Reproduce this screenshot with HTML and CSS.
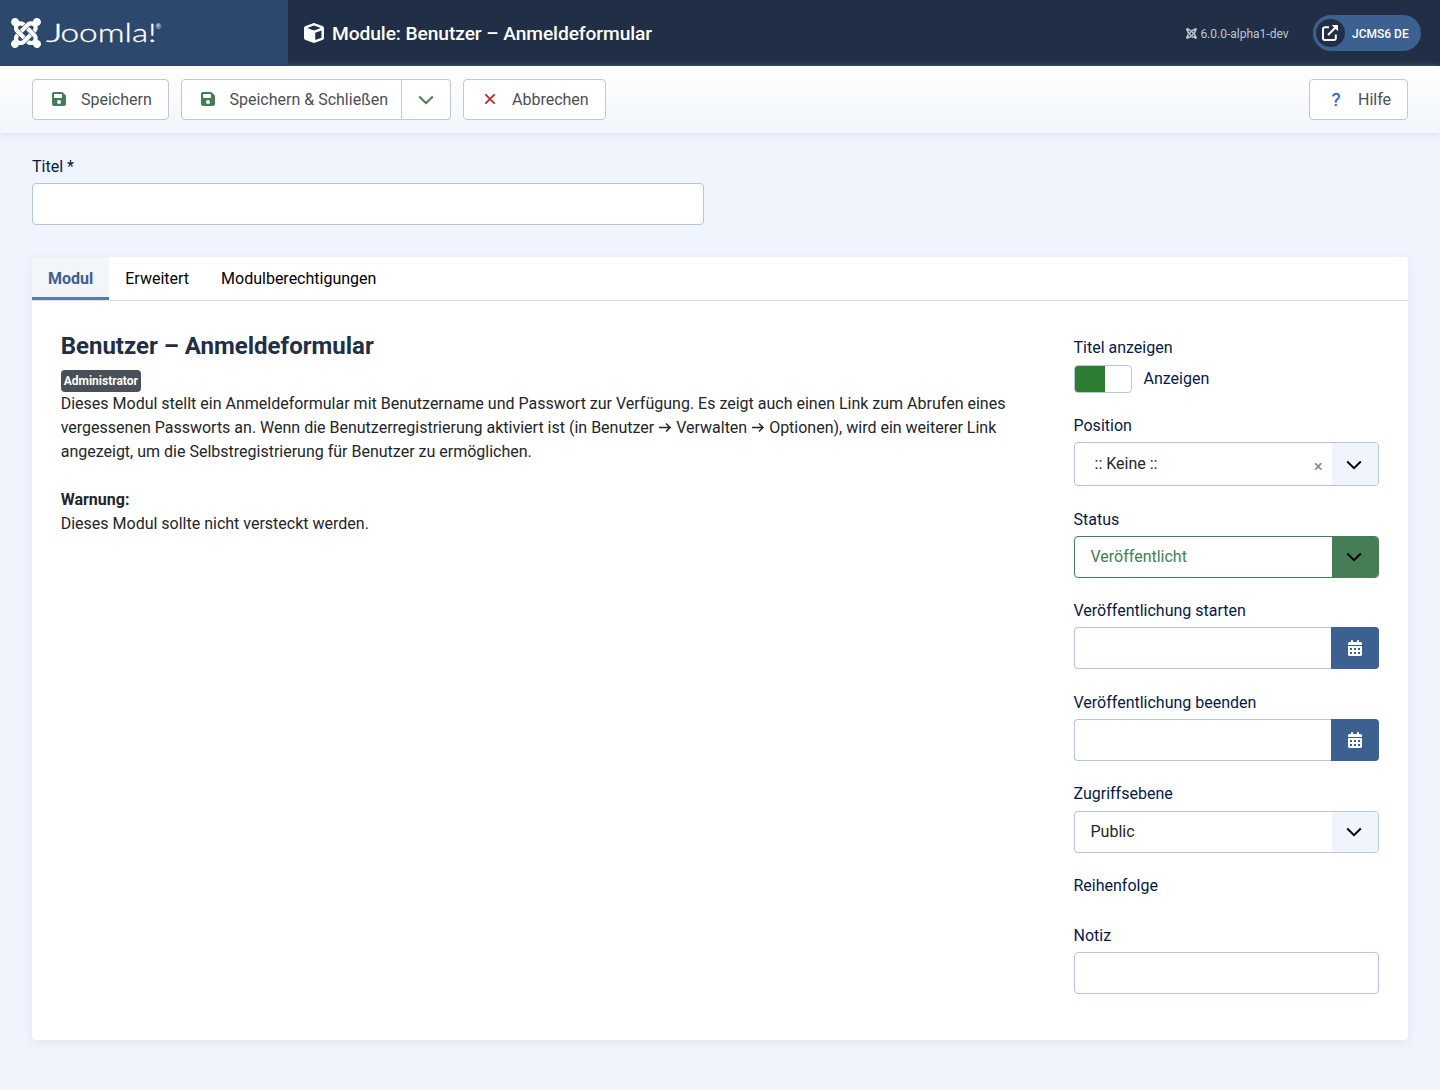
FILE: index.html
```html
<!DOCTYPE html>
<html lang="de">
<head>
<meta charset="utf-8">
<title>Module: Benutzer – Anmeldeformular</title>
<link rel="stylesheet" href="styles.css">
</head>
<body>
<svg class="defs" aria-hidden="true">
  <symbol id="joomla" viewBox="0 32 448 448"><path d="M.6 92.1C.6 58.8 27.4 32 60.4 32c30 0 54.5 21.9 59.2 50.2 32.6-7.6 67.1.6 96.5 30l-44.3 44.3c-20.5-20.5-42.6-16.3-55.4-3.5-14.3 14.3-14.3 37.9 0 52.2l99.5 99.5-44 44.3c-87.7-87.2-49.7-49.7-99.8-99.7-26.8-26.5-35-64.8-24.8-98.9C20.4 144.6.6 120.7.6 92.1zm129.5 116.4l44.3 44.3c10-10 89.7-89.7 99.7-99.8 14.3-14.3 37.6-14.3 51.9 0 12.8 12.8 17 35-3.5 55.4l44 44.3c31.2-31.2 38.5-67.6 28.9-101.2 29.2-4.1 51.9-29.2 51.9-59.5 0-33.2-26.8-60.1-59.8-60.1-30.3 0-55.4 22.5-59.5 51.6-33.8-9.900-71.700-1.500-98.300 25.100-18.300 19.100-71.100 71.500-99.600 99.900zm266.300 152.200c8.200-32.700-.9-68.500-26.300-93.900-11.800-12.200 5 4.700-99.500-99.700l-44.300 44.300 99.700 99.700c14.300 14.300 14.300 37.600 0 51.900-12.800 12.800-35 17-55.400-3.500l-44 44.300c27.600 30.200 68 38.800 102.700 28 5.500 27.400 29.700 48.100 58.900 48.100 33 0 59.800-26.800 59.800-60.100 0-30.200-22.500-55-51.600-59.100zm-84.300-53.100l-44-44.300c-87 86.400-50.400 50.400-99.700 99.800-14.300 14.300-37.600 14.300-51.900 0-13.100-13.400-16.900-35.300 3.200-55.400l-44-44.300c-30.200 30.200-38 65.200-29.500 98.300-26.700 6-46.200 29.900-46.200 58.200C0 453.200 26.800 480 59.800 480c28.600 0 52.500-19.800 58.600-46.700 32.700 8.200 68.500-.6 94.200-26 32.100-32 12.200-12.400 99.500-99.700z"/></symbol>
  <symbol id="save" viewBox="0 32 448 448"><path d="M64 32C28.700 32 0 60.700 0 96V416c0 35.300 28.700 64 64 64H384c35.300 0 64-28.700 64-64V173.300c0-17-6.700-33.300-18.700-45.300L352 50.700C340 38.700 323.700 32 306.700 32H64zm0 96c0-17.700 14.300-32 32-32H288c17.700 0 32 14.300 32 32v64c0 17.700-14.300 32-32 32H96c-17.700 0-32-14.300-32-32V128zM224 288a64 64 0 1 1 0 128 64 64 0 1 1 0-128z"/></symbol>
  <symbol id="cube" viewBox="0 0 512 512"><path d="M234.500 5.700c13.900-5 29.100-5 43.100 0l192 68.600C495 83.400 512 107.500 512 134.600V377.400c0 27-17 51.200-42.500 60.300l-192 68.600c-13.900 5-29.100 5-43.100 0l-192-68.600C17 428.600 0 404.500 0 377.400V134.600c0-27 17-51.200 42.500-60.300l192-68.600zM256 66L82.300 128 256 190l173.700-62L256 66zm32 368.600l160-57.100v-188L288 246.600v188z"/></symbol>
  <symbol id="calendar" viewBox="0 0 448 512"><path fill-rule="evenodd" d="M128 0c17.700 0 32 14.300 32 32V64H288V32c0-17.700 14.300-32 32-32s32 14.300 32 32V64h48c26.500 0 48 21.500 48 48v48H0V112C0 85.500 21.500 64 48 64H96V32c0-17.700 14.300-32 32-32zM0 192H448V464c0 26.500-21.500 48-48 48H48c-26.500 0-48-21.500-48-48V192zM64 256v64h64v-64zM192 256v64h64v-64zM320 256v64h64v-64zM64 384v64h64v-64zM192 384v64h64v-64zM320 384v64h64v-64z"/></symbol>
  <symbol id="chevron" viewBox="0 0 16 10"><path fill="none" stroke="currentColor" stroke-width="2" d="M1.200 1.500 8 8.200 14.800 1.500"/></symbol>
  <symbol id="external" viewBox="0 0 16 16"><path fill="none" stroke="currentColor" stroke-width="2" d="M7 2.200H2.800A1.800 1.800 0 0 0 1 4v9.200A1.800 1.800 0 0 0 2.800 15H12a1.800 1.800 0 0 0 1.800-1.800V9.500M6 10 13.500 2.500"/><path d="M9.700 0H16v6.300z"/></symbol>
  <symbol id="cross" viewBox="0 0 10 10"><path fill="none" stroke="currentColor" stroke-width="1.800" d="m.3.3 9.400 9.400M9.700.3.3 9.700"/></symbol>
</svg>

<header class="header">
  <div class="brand">
    <svg class="brand-mark"><use href="#joomla"/></svg>
    <svg class="brand-word" viewBox="0 0 118 32">
      <text class="word" x="0" y="25" textLength="17" lengthAdjust="spacingAndGlyphs">J</text>
      <text class="word" x="14.500" y="25" textLength="96" lengthAdjust="spacingAndGlyphs">oomla!</text>
      <text class="reg" x="109.500" y="12">®</text>
    </svg>
  </div>
  <div class="header-main">
    <svg class="cube"><use href="#cube"/></svg>
    <h1 class="page-title">Module: Benutzer – Anmeldeformular</h1>
    <div class="version"><svg class="version-mark"><use href="#joomla"/></svg>6.0.0-alpha1-dev</div>
    <a class="site-link"><span class="site-icon"><svg><use href="#external"/></svg></span><span class="site-name">JCMS6 DE</span></a>
  </div>
</header>

<div class="toolbar">
  <button class="btn btn-save"><svg class="icon"><use href="#save"/></svg><span>Speichern</span></button>
  <div class="btn-group">
    <button class="btn btn-close"><svg class="icon"><use href="#save"/></svg><span>Speichern &amp; Schließen</span></button>
    <button class="btn btn-toggle"><svg class="chevron"><use href="#chevron"/></svg></button>
  </div>
  <button class="btn btn-cancel"><svg class="icon-cross"><use href="#cross"/></svg><span>Abbrechen</span></button>
  <button class="btn btn-help"><span class="question">?</span><span>Hilfe</span></button>
</div>

<main class="content">
  <div class="title-field">
    <label class="label" for="titel">Titel *</label>
    <input class="input" id="titel" type="text">
  </div>

  <section class="card">
    <nav class="tabs">
      <a class="tab tab-active">Modul</a>
      <a class="tab">Erweitert</a>
      <a class="tab">Modulberechtigungen</a>
    </nav>
    <div class="panel">
      <article class="description">
        <h2 class="module-name">Benutzer – Anmeldeformular</h2>
        <div class="badge-row"><span class="badge">Administrator</span></div>
        <p class="text">Dieses Modul stellt ein Anmeldeformular mit Benutzername und Passwort zur Verfügung. Es zeigt auch einen Link zum Abrufen eines<br>vergessenen Passworts an. Wenn die Benutzerregistrierung aktiviert ist (in Benutzer <svg class="arrow" viewBox="0 0 14 12"><path d="M1 6.500h11M8 2.500l4 4-4 4"/></svg> Verwalten <svg class="arrow" viewBox="0 0 14 12"><path d="M1 6.500h11M8 2.500l4 4-4 4"/></svg> Optionen), wird ein weiterer Link<br>angezeigt, um die Selbstregistrierung für Benutzer zu ermöglichen.<br><br><strong>Warnung:</strong><br>Dieses Modul sollte nicht versteckt werden.</p>
      </article>

      <aside class="sidebar">
        <div class="field">
          <span class="label">Titel anzeigen</span>
          <div class="switch-row"><span class="switch"><span class="switch-on"></span></span><span>Anzeigen</span></div>
        </div>
        <div class="field">
          <span class="label">Position</span>
          <div class="select select-position"><span class="value">:: Keine ::</span><span class="clear">×</span><span class="arrow-box"><svg class="chevron"><use href="#chevron"/></svg></span></div>
        </div>
        <div class="field">
          <span class="label">Status</span>
          <div class="select select-status"><span class="value">Veröffentlicht</span><span class="arrow-box"><svg class="chevron"><use href="#chevron"/></svg></span></div>
        </div>
        <div class="field">
          <label class="label" for="start">Veröffentlichung starten</label>
          <div class="date"><input class="input" id="start" type="text"><button class="date-btn"><svg><use href="#calendar"/></svg></button></div>
        </div>
        <div class="field">
          <label class="label" for="ende">Veröffentlichung beenden</label>
          <div class="date"><input class="input" id="ende" type="text"><button class="date-btn"><svg><use href="#calendar"/></svg></button></div>
        </div>
        <div class="field">
          <span class="label">Zugriffsebene</span>
          <div class="select"><span class="value">Public</span><span class="arrow-box"><svg class="chevron"><use href="#chevron"/></svg></span></div>
        </div>
        <div class="field">
          <span class="label">Reihenfolge</span>
        </div>
        <div class="field">
          <label class="label" for="notiz">Notiz</label>
          <input class="input" id="notiz" type="text">
        </div>
      </aside>
    </div>
  </section>
</main>
</body>
</html>
```
FILE: styles.css
```css
* { box-sizing: border-box; }

body {
  margin: 0;
  min-height: 1090px;
  background: #f0f4fd;
  color: #22262a;
  font: 400 16px/24px Roboto, sans-serif;
}

svg { display: block; fill: currentColor; }
.defs { width: 0; height: 0; position: absolute; }
button, input { font: inherit; }

.header { display: flex; height: 66px; color: #fff; background: #202f46; }
.brand { display: flex; align-items: center; width: 288px; padding-left: 11px; background: #2d486d; }
.brand-mark { width: 30px; height: 30px; }
.brand-word { width: 118px; height: 32px; margin-left: 5px; }
.word { font: 300 24.500px Lato, sans-serif; stroke: #fff; stroke-width: .3px; }
.reg { font: 400 7px Lato, sans-serif; }
.header-main { display: flex; align-items: center; flex: 1; padding: 0 19px 0 16px; }
.cube { width: 20px; height: 20px; }
.page-title { margin: 0 auto 0 8px; padding-top: 1px; font-size: 19.200px; line-height: 24px; font-weight: 500; letter-spacing: -.08px; }
.version { display: flex; align-items: center; gap: 3px; margin-right: 24.500px; padding-top: 1px; font-size: 12px; color: #bfc7d3; }
.version-mark { width: 11px; height: 11px; }
.site-link {
  display: flex; align-items: center; gap: 7px;
  width: 108px; height: 36px; padding-left: 3px;
  border-radius: 18px; background: #3c608f;
  font-size: 12px; font-weight: 500; white-space: nowrap;
}
.site-icon { display: grid; place-items: center; width: 29px; height: 28px; padding-right: 1px; border-radius: 50%; background: #202f46; }
.site-icon svg { width: 16px; height: 16px; }
.site-name { padding-top: 1px; }

.toolbar {
  display: flex; align-items: center; gap: 12px;
  height: 67px; padding: 0 32px;
  background: linear-gradient(#fff, #f2f6fa);
  box-shadow: 0 3px 8px -1px #d9e1f0;
}
.btn {
  display: flex; align-items: center;
  height: 41px; padding: 0;
  border: 1px solid #c1c8d3; border-radius: 4px;
  background: #fff; color: #495057; white-space: nowrap;
}
.btn-group { display: flex; }
.btn-save { width: 137px; padding-left: 19px; gap: 15px; }
.btn-close { width: 221px; padding-left: 19px; gap: 14.500px; border-radius: 4px 0 0 4px; }
.btn-toggle { width: 49px; justify-content: center; border-left: 0; border-radius: 0 4px 4px 0; color: #457d54; }
.btn-cancel { width: 143px; padding-left: 21px; gap: 17px; }
.btn-help { width: 99px; margin-left: auto; padding-left: 21px; gap: 17px; }
.icon { width: 14px; height: 14px; margin-top: -1px; color: #457d54; }
.icon-cross { width: 10px; height: 10px; margin-top: -1px; color: #c52827; }
.question { width: 10px; font-size: 19px; color: #2a69b8; -webkit-text-stroke: .3px #2a69b8; }
.chevron { width: 16px; height: 10px; }
.btn .chevron { margin-top: 1px; }

.content { padding: 22px 32px 50px; }
.label { display: block; height: 24px; margin-bottom: 4.400px; color: #06194a; }
.title-field { width: 672px; margin-bottom: 31.600px; }
.input {
  display: block; width: 100%; height: 42px;
  border: 1px solid #b5c6df; border-radius: 4px; background: #fff;
}

.card { height: 783px; border-radius: 4px; background: #fff; box-shadow: 0 2px 8px #dde5f3; }
.tabs { display: flex; height: 44px; border-bottom: 1px solid #d9e2ec; }
.tab { height: 43px; padding: 10px 16px 0; color: #000; }
.tab-active { border-bottom: 3px solid #5b7ba9; border-radius: 4px 0 0 0; background: #f2f6f9; color: #3c608f; font-weight: 700; }
.panel { display: flex; justify-content: space-between; padding: 30px 29px 0 28.700px; }
.module-name { margin: 0; padding-top: 1px; font-size: 24px; line-height: 29px; font-weight: 700; color: #202f46; }
.badge-row { display: flex; height: 31px; padding-top: 9px; }
.badge { height: 22px; padding: 0 3px; border-radius: 4px; background: #495057; color: #fff; font-size: 12px; line-height: 22px; font-weight: 700; }
.text { margin: 0; white-space: nowrap; }
.arrow { display: inline-block; width: 14px; height: 12px; fill: none; stroke: currentColor; stroke-width: 1.500; }

.sidebar { display: flex; flex-direction: column; gap: 21.200px; width: 305.500px; padding-top: 5px; }
.field { min-height: 28.800px; }
.switch-row { display: flex; align-items: center; gap: 12px; height: 28.200px; padding-top: 1px; color: #06194a; }
.switch { width: 58px; height: 28px; border: 1px solid #b5c6df; border-radius: 4px; overflow: hidden; flex: none; }
.switch-on { display: block; width: 30px; height: 100%; background: #2f7d32; }
.select { display: flex; height: 42px; border: 1px solid #b5c6df; border-radius: 4px; overflow: hidden; background: #fff; }
.value { flex: 1; padding: 8px 0 0 16px; }
.arrow-box { display: grid; place-items: center; width: 46px; padding: 1px 1.500px 0 0; background: #f0f4fd; color: #000; }
.select-position { height: 44.200px; }
.select-position .value { padding: 9px 0 0 20px; }
.clear { margin: 12px 9.500px 0 0; color: #888; font-size: 16px; font-weight: 500; }
.select-status { border-color: #457d54; color: #457d54; }
.select-status .arrow-box { background: #457d54; }
.date { display: flex; }
.date .input { flex: 1; border-right: 0; border-radius: 4px 0 0 4px; }
.date-btn { display: grid; place-items: center; width: 48px; padding: 0; border: 0; border-radius: 0 4px 4px 0; background: #3c608f; color: #fff; }
.date-btn svg { width: 14px; height: 16px; }
```
